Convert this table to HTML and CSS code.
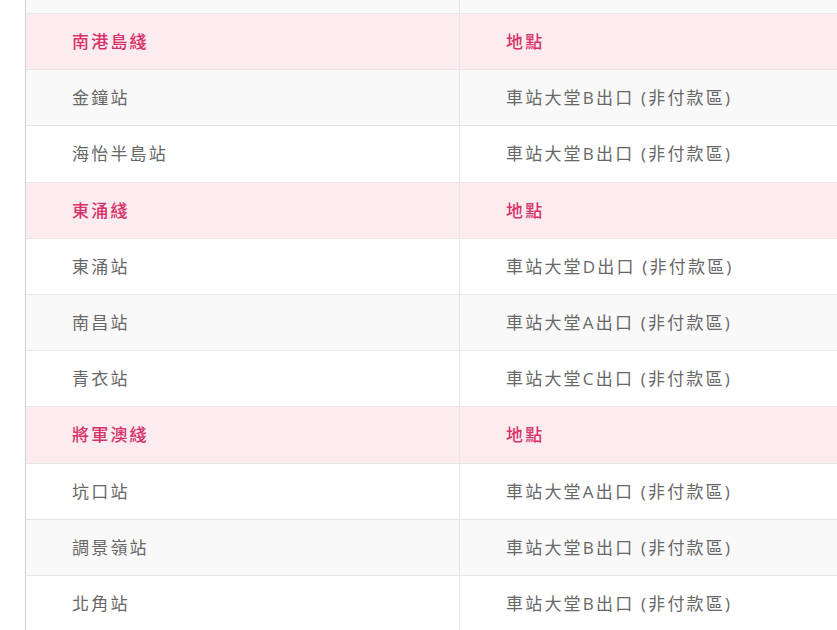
FILE: index.html
```html
<!DOCTYPE html>
<html lang="zh-Hant">
<head>
<meta charset="utf-8">
<title>車站位置</title>
<link rel="stylesheet" href="styles.css">
</head>
<body>
<div class="page">
<table class="stations">
  <colgroup><col class="c1"><col class="c2"></colgroup>
  <tbody>
    <tr class="lead"><td>&nbsp;</td><td class="loc">&nbsp;</td></tr>
    <tr class="head"><td>南港島綫</td><td class="loc">地點</td></tr>
    <tr><td>金鐘站</td><td class="loc">車站大堂B出口 (非付款區)</td></tr>
    <tr><td>海怡半島站</td><td class="loc">車站大堂B出口 (非付款區)</td></tr>
    <tr class="head"><td>東涌綫</td><td class="loc">地點</td></tr>
    <tr><td>東涌站</td><td class="loc">車站大堂D出口 (非付款區)</td></tr>
    <tr><td>南昌站</td><td class="loc">車站大堂A出口 (非付款區)</td></tr>
    <tr><td>青衣站</td><td class="loc">車站大堂C出口 (非付款區)</td></tr>
    <tr class="head"><td>將軍澳綫</td><td class="loc">地點</td></tr>
    <tr><td>坑口站</td><td class="loc">車站大堂A出口 (非付款區)</td></tr>
    <tr><td>調景嶺站</td><td class="loc">車站大堂B出口 (非付款區)</td></tr>
    <tr><td>北角站</td><td class="loc">車站大堂B出口 (非付款區)</td></tr>
  </tbody>
</table>
</div>
</body>
</html>
```
FILE: styles.css
```css
html, body {
  margin: 0;
  padding: 0;
  background: #ffffff;
  overflow: hidden;
  height: 630px;
}
.page {
  padding-left: 25px;
  margin-top: -43.2px;
}
.stations {
  border-spacing: 0;
  border-left: 1px solid #cfcfcf;
  table-layout: fixed;
  width: 868px;
  font-family: "Open Sans", "Noto Sans CJK TC", sans-serif;
  font-size: 17px;
  letter-spacing: 2.2px;
  color: #676767;
}
.c1 { width: 433px; }
.c2 { width: 435px; }
.stations td {
  border-top: 1px solid #e6e6e6;
  padding: 15px 20px 15px 46px;
  line-height: 25.2px;
  white-space: nowrap;
  text-align: left;
}
.stations td.loc {
  border-left: 1px solid #e6e6e6;
}
.stations tr:nth-child(odd) td {
  background: #f9f9f9;
}
.stations tr:nth-child(even) td {
  background: #ffffff;
}
.stations tr.head td {
  background: #fcebef;
  color: #d7336a;
  font-weight: 500;
}
```
